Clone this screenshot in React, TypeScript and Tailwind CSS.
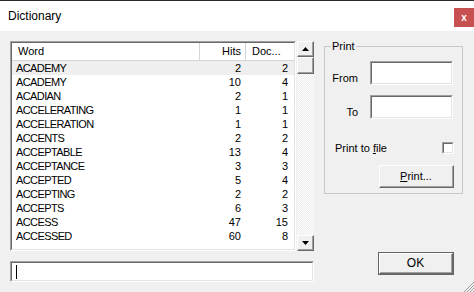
import React from "react";

const rows: [string, number, number][] = [
  ["ACADEMY", 2, 2],
  ["ACADEMY", 10, 4],
  ["ACADIAN", 2, 1],
  ["ACCELERATING", 1, 1],
  ["ACCELERATION", 1, 1],
  ["ACCENTS", 2, 2],
  ["ACCEPTABLE", 13, 4],
  ["ACCEPTANCE", 3, 3],
  ["ACCEPTED", 5, 4],
  ["ACCEPTING", 2, 2],
  ["ACCEPTS", 6, 3],
  ["ACCESS", 47, 15],
  ["ACCESSED", 60, 8],
];

function Sunken({ className, children }: { className: string; children?: React.ReactNode }) {
  return (
    <div className={"border-t border-l border-t-[#a0a0a0] border-l-[#a0a0a0] border-r border-b border-r-white border-b-white " + className}>
      <div className="w-full h-full border-t border-l border-t-[#696969] border-l-[#696969] border-r border-b border-r-[#e3e3e3] border-b-[#e3e3e3] bg-white relative overflow-hidden">
        {children}
      </div>
    </div>
  );
}

function Raised({ className, children }: { className: string; children?: React.ReactNode }) {
  return (
    <div className={"border-r border-b border-r-[#696969] border-b-[#696969] border-t border-l border-t-white border-l-white bg-[#f0f0f0] " + className}>
      <div className="w-full h-full border-r border-b border-r-[#a0a0a0] border-b-[#a0a0a0] flex items-center justify-center">
        {children}
      </div>
    </div>
  );
}

export default function App() {
  return (
    <div
      className="w-[474px] h-[292px] bg-[#f0f0f0] relative overflow-hidden text-black text-[11px] leading-[13px]"
      style={{ fontFamily: '"Liberation Sans", Arial, sans-serif' }}
    >
      {/* title bar */}
      <div className="h-[31px] bg-white border-t border-[#2b2b2b] flex items-start">
        <div className="pl-[8px] pt-[7px] text-[12px] leading-[16px]">Dictionary</div>
        <div className="ml-auto mt-[7px] w-[20px] h-[19px] bg-[#c75050] flex items-center justify-center text-white font-bold text-[10px] leading-[10px]">
          x
        </div>
      </div>

      <div className="flex pl-[10px] pt-[10px]">
        {/* left column */}
        <div className="flex flex-col w-[304px]">
          <div className="flex h-[210px]">
            <Sunken className="w-[286px] h-[210px]">
              <div className="flex h-[18px] border-b border-[#d5d5d5] bg-white">
                <div className="w-[188px] pl-[6px] border-r border-[#d5d5d5] leading-[17px]">Word</div>
                <div className="w-[46px] pr-[4px] text-right border-r border-[#d5d5d5] leading-[17px]">Hits</div>
                <div className="w-[48px] pl-[6px] leading-[17px]">Doc...</div>
              </div>
              {rows.map(([w, h, d], i) => (
                <div key={i} className={"flex h-[14px] leading-[15px] " + (i === 0 ? "bg-[#efefef]" : "")}>
                  <div className="w-[188px] pl-[4px] tracking-[-0.6px]">{w}</div>
                  <div className="w-[46px] pr-[5px] text-right">{h}</div>
                  <div className="w-[48px] pr-[6px] text-right">{d}</div>
                </div>
              ))}
            </Sunken>
            <div className="ml-[1px] w-[17px] flex flex-col">
              <Raised className="h-[16px]">
                <svg width="7" height="4" viewBox="0 0 7 4"><path d="M3.5 0 L7 4 L0 4 Z" fill="#000" /></svg>
              </Raised>
              <Raised className="h-[17px]" />
              <div className="flex-1 bg-[repeating-conic-gradient(#ffffff_0_25%,#ebebeb_0_50%)] bg-[length:2px_2px]" />
              <Raised className="h-[16px]">
                <svg width="7" height="4" viewBox="0 0 7 4"><path d="M0 0 L7 0 L3.5 4 Z" fill="#000" /></svg>
              </Raised>
            </div>
          </div>
          <Sunken className="mt-[10px] w-[304px] h-[21px]">
            <div className="absolute left-[4px] top-[2px] w-[1px] h-[14px] bg-black" />
          </Sunken>
        </div>

        {/* right column */}
        <div className="ml-[10px] flex flex-col">
          <div className="relative mt-[5px] w-[139px] h-[148px] border border-[#c8c8c8]">
            <span className="absolute left-[6px] top-[-7px] px-[1px] bg-[#f0f0f0] leading-[13px]">Print</span>
            <div className="flex items-end mt-[14px]">
              <div className="w-[33px] text-right pb-[0px]">From</div>
              <Sunken className="ml-[12px] w-[83px] h-[24px]" />
            </div>
            <div className="flex items-end mt-[10px]">
              <div className="w-[33px] text-right">To</div>
              <Sunken className="ml-[12px] w-[83px] h-[24px]" />
            </div>
            <div className="flex items-center mt-[22px] h-[13px]">
              <div className="pl-[10px] pt-[1px]">
                Print to <span className="underline">f</span>ile
              </div>
              <Sunken className="ml-auto mr-[8px] w-[12px] h-[12px]" />
            </div>
            <div className="flex justify-end mr-[8px] mt-[11px]">
              <Raised className="w-[75px] h-[23px]">
                <span>
                  <span className="underline">P</span>rint...
                </span>
              </Raised>
            </div>
          </div>
          <div className="mt-[58px] ml-[54px] w-[76px] h-[23px] border border-[#646464]">
            <Raised className="w-full h-full">
              <span className="text-[12px]">OK</span>
            </Raised>
          </div>
        </div>
      </div>

      {/* resize grip */}
      <svg className="absolute right-0 bottom-0" width="12" height="12" viewBox="0 0 12 12">
        <path d="M12 2 L2 12 M12 5 L5 12 M12 8 L8 12 M12 11 L11 12" stroke="#a0a0a0" strokeWidth="1" />
      </svg>
    </div>
  );
}
